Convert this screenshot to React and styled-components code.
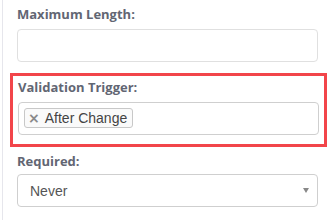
import React from "react";
import styled, { createGlobalStyle } from "styled-components";

const Global = createGlobalStyle`
  html, body { margin: 0; padding: 0; background: #ffffff; }
  * { box-sizing: border-box; }
`;

const Page = styled.div`
  width: 333px;
  height: 220px;
  margin-left: 2px;
  border-left: 1px solid #e6e6ec;
  padding: 5px 0 0 6px;
  display: flex;
  flex-direction: column;
`;

const Field = styled.div`
  display: flex;
  flex-direction: column;
  padding: ${(p) => (p.$highlight ? "2px 4px 9px 5px" : "0 15px 0 8px")};
  border: ${(p) => (p.$highlight ? "3px solid #f2454a" : "none")};
  width: ${(p) => (p.$highlight ? "317px" : "auto")};
  margin: ${(p) => p.$margin || "0"};
`;

const Label = styled.label`
  font-family: "Open Sans", "Liberation Sans", sans-serif;
  font-weight: 700;
  font-size: 13px;
  line-height: 18px;
  color: #626673;
  margin-bottom: ${(p) => p.$gap || 6}px;
`;

const TextInput = styled.div`
  width: 301px;
  height: 33px;
  border: 1px solid ${(p) => p.$border || "#d6d6d6"};
  border-radius: 4px;
  background: #fff;
`;

const TagBox = styled.div`
  width: 301px;
  height: 33px;
  border: 1px solid #cfcfcf;
  border-radius: 4px;
  background: #fff;
  display: flex;
  align-items: flex-start;
  padding: 5px;
`;

const Chip = styled.span`
  display: inline-flex;
  align-items: center;
  height: 20px;
  padding: 0 5px 0 3px;
  border: 1px solid #c8c8c8;
  border-radius: 3px;
  background: #fafafa;
  font-family: "Liberation Sans", Arial, sans-serif;
  font-size: 14px;
  color: #444;
  gap: 5px;
`;

const Remove = styled.span`
  font-family: "DejaVu Sans", sans-serif;
  font-size: 14px;
  font-weight: 700;
  color: #8a8a8a;
  line-height: 1;
`;

const Select = styled.div`
  width: 301px;
  height: 33px;
  border: 1px solid #cfcfcf;
  border-radius: 4px;
  background: #fff;
  display: flex;
  align-items: center;
  justify-content: space-between;
  padding: 0 8px 0 12px;
  font-family: "Liberation Sans", Arial, sans-serif;
  font-size: 14px;
  color: #555;
`;

const Arrow = styled.span`
  width: 0;
  height: 0;
  border-left: 3.5px solid transparent;
  border-right: 3.5px solid transparent;
  border-top: 5px solid #888;
`;

export default function App() {
  return (
    <>
      <Global />
      <Page>
        <Field>
          <Label>Maximum Length:</Label>
          <TextInput $border="#e0e0e0" />
        </Field>
        <Field $highlight $margin="11px 0 0 1px">
          <Label>Validation Trigger:</Label>
          <TagBox>
            <Chip>
              <Remove>×</Remove>
              After Change
            </Chip>
          </TagBox>
        </Field>
        <Field $margin="5px 0 0 0">
          <Label $gap={4}>Required:</Label>
          <Select>
            Never
            <Arrow />
          </Select>
        </Field>
      </Page>
    </>
  );
}
